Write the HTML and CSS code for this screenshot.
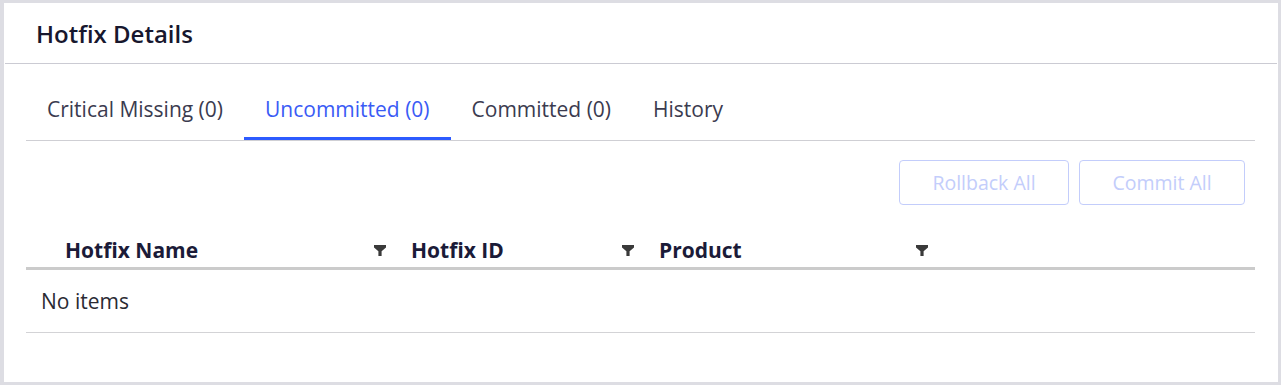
FILE: index.html
```html
<!DOCTYPE html>
<html lang="en">
<head>
  <meta charset="UTF-8" />
  <meta name="viewport" content="width=device-width, initial-scale=1.0"/>
  <title>Hotfix Details</title>
  <link rel="stylesheet" href="styles.css">
</head>
<body>

<div class="card">
  <!-- Title -->
  <div class="card-header">
    <h2>Hotfix Details</h2>
  </div>

  <div class="card-body">
    <!-- Tabs -->
    <div class="tabs">
      <div class="tab">Critical Missing (0)</div>
      <div class="tab active">Uncommitted (0)</div>
      <div class="tab">Committed (0)</div>
      <div class="tab">History</div>
    </div>

    <!-- Actions -->
    <div class="toolbar">
      <button class="btn btn-rollback" disabled>Rollback All</button>
      <button class="btn btn-commit" disabled>Commit All</button>
    </div>

    <!-- Table -->
    <div class="grid">
      <div class="grid-head">
        <div class="col col-name">
          <span>Hotfix Name</span>
          <svg class="filter" viewBox="0 0 12 11"><path d="M0 0H12V2.5L7.6 6.2V11H4.4V6.2L0 2.5Z" /></svg>
        </div>
        <div class="col col-id">
          <span>Hotfix ID</span>
          <svg class="filter" viewBox="0 0 12 11"><path d="M0 0H12V2.5L7.6 6.2V11H4.4V6.2L0 2.5Z" /></svg>
        </div>
        <div class="col col-product">
          <span>Product</span>
          <svg class="filter" viewBox="0 0 12 11"><path d="M0 0H12V2.5L7.6 6.2V11H4.4V6.2L0 2.5Z" /></svg>
        </div>
      </div>
      <div class="grid-empty">No items</div>
    </div>
  </div>
</div>

</body>
</html>
```

FILE: styles.css
```css
body, html {
  margin: 0;
  padding: 0;
  font-family: 'Open Sans', sans-serif;
  background: #dddde3;
}

.card {
  margin: 3px 3px 0 4px;
  height: 379px;
  background: #fff;
  box-sizing: border-box;
}

.card-header {
  height: 60px;
  display: flex;
  align-items: center;
  padding-left: 31px;
  border-bottom: 1px solid #cbcbd3;
  margin: 0 1px;
}

.card-header h2 {
  margin: 0;
  font-size: 24px;
  font-weight: 600;
  color: #17172e;
}

.card-body {
  padding: 0 23px 0 22px;
}

.tabs {
  display: flex;
  margin-top: 16px;
  border-bottom: 1px solid #cfcfd4;
}

.tab {
  padding: 17px 21px 15px;
  line-height: 25px;
  font-size: 21px;
  color: #3b3b4f;
  border-bottom: 3px solid transparent;
  cursor: pointer;
}

.tab.active {
  color: #3a5bf5;
  border-bottom-color: #2d5bff;
}

.toolbar {
  display: flex;
  justify-content: flex-end;
  gap: 10px;
  padding: 19px 10px 0 0;
}

.btn {
  height: 45px;
  font-family: 'Open Sans', sans-serif;
  font-size: 19.5px;
  color: #c3cdfb;
  background: #fff;
  border: 1px solid #c3cdfb;
  border-radius: 4px;
}

.btn-rollback { width: 170px; }
.btn-commit { width: 166px; }

.grid-head {
  display: flex;
  margin-top: 26px;
  padding: 2px 0 0 26px;
  box-sizing: border-box;
  height: 39px;
  align-items: center;
  border-bottom: 3px solid #cbcbcb;
}

.col {
  display: flex;
  align-items: center;
  justify-content: space-between;
  padding: 0 12px 0 13px;
  box-sizing: border-box;
  font-size: 21px;
  font-weight: 700;
  color: #1b1b38;
}

.col-name { width: 346px; }
.col-id { width: 248px; }
.col-product { width: 294px; }

.filter {
  width: 12px;
  height: 11px;
  fill: #3a3a3a;
}

.grid-empty {
  height: 62px;
  line-height: 62px;
  padding-left: 15px;
  font-size: 21px;
  color: #2a2a33;
  border-bottom: 1px solid #d3d3d6;
}
```
